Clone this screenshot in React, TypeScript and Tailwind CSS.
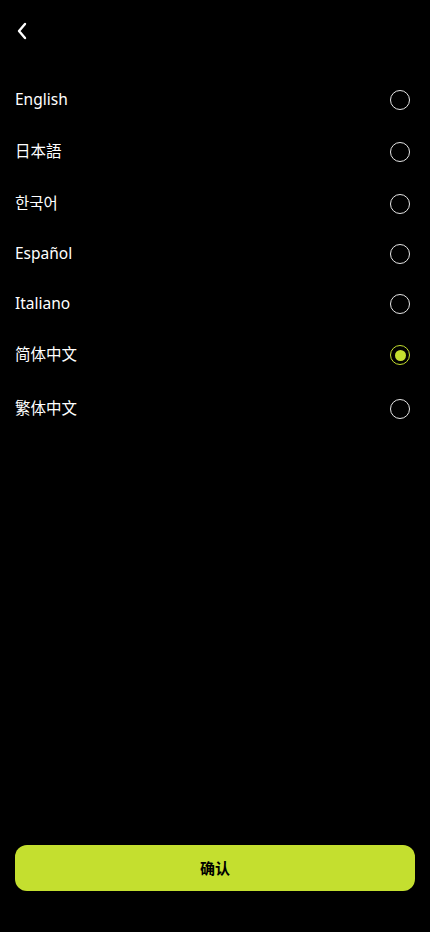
import React, { useState } from "react";

const languages = ["English", "日本語", "한국어", "Español", "Italiano", "简体中文", "繁体中文"];
const rowHeights = ["h-[52px]", "h-[52px]", "h-[51px]", "h-[50px]", "h-[50px]", "h-[52px]", "h-[56px]"];

function Radio({ checked }: { checked: boolean }) {
  return checked ? (
    <span className="flex h-[20px] w-[20px] items-center justify-center rounded-full border border-[#c4df2f]">
      <span className="h-[11px] w-[11px] rounded-full bg-[#c4df2f]" />
    </span>
  ) : (
    <span className="h-[20px] w-[20px] rounded-full border border-[#e6e6e6]" />
  );
}

export default function App() {
  const [selected, setSelected] = useState("简体中文");
  return (
    <div
      className="flex h-[932px] w-[430px] flex-col bg-black text-white"
      style={{ fontFamily: '"Noto Sans", "Noto Sans CJK SC", "Noto Sans CJK KR", sans-serif' }}
    >
      <div className="flex h-[62px] items-center pl-[15px]">
        <svg width="14" height="18" viewBox="0 0 14 18" fill="none">
          <path d="M10 2 L4 9 L10 16" stroke="white" strokeWidth="2.4" strokeLinecap="round" strokeLinejoin="round" />
        </svg>
      </div>
      <div className="mt-[12px] flex flex-col">
        {languages.map((lang, i) => (
          <button
            key={lang}
            onClick={() => setSelected(lang)}
            className={`flex items-center justify-between pl-[15px] pr-[20px] text-left text-[15.5px] ${rowHeights[i]}`}
          >
            <span className="leading-none">{lang}</span>
            <Radio checked={selected === lang} />
          </button>
        ))}
      </div>
      <div className="flex-1" />
      <div className="px-[15px] pb-[41px]">
        <button className="flex h-[46px] w-full items-center justify-center rounded-[12px] bg-[#c4df2f] text-[15px] font-bold text-black">
          确认
        </button>
      </div>
    </div>
  );
}
